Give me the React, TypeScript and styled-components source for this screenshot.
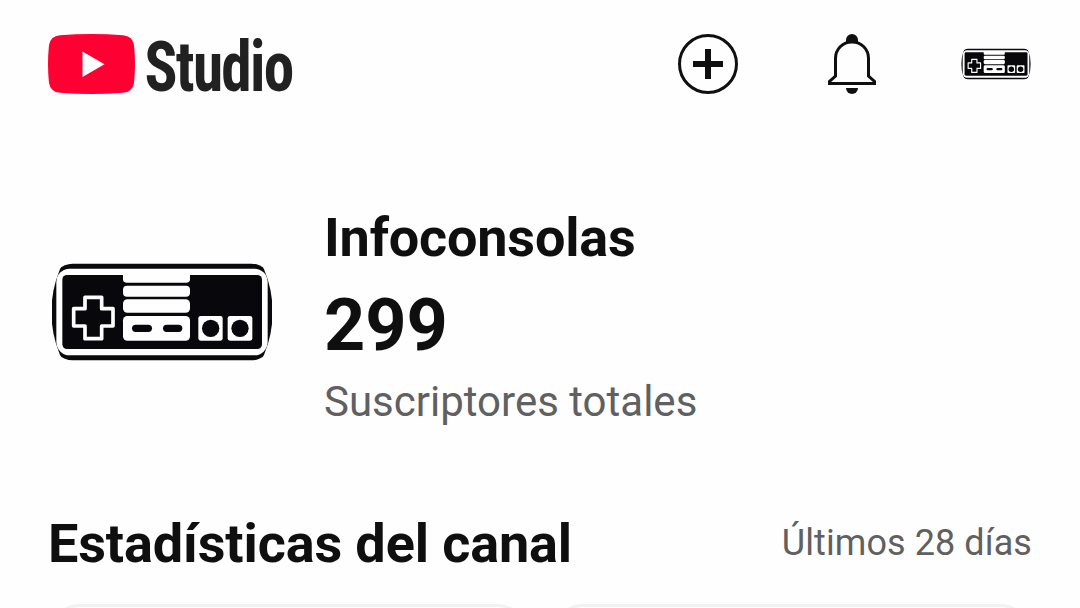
import React from 'react'
import styled, { createGlobalStyle } from 'styled-components'

const GlobalStyle = createGlobalStyle`
  * {
    box-sizing: border-box;
  }
  body {
    margin: 0;
    background: #fefefe;
    color: #0f0f0f;
    font-family: Roboto, 'Liberation Sans', sans-serif;
    overflow: hidden;
  }
`

interface IAvatarProps {
  size: number
}
const Avatar: React.FC<IAvatarProps> = ({ size }) => {
  const clipId = `avatar-clip-${size}`
  return (
    <AvatarSvg $size={size} viewBox="33 -147 666 666">
      <clipPath id={clipId}>
        <circle cx="366" cy="186" r="332" />
      </clipPath>
      <g clipPath={`url(#${clipId})`}>
        <rect x="36" y="41" width="660" height="290" rx="62" fill="#0a0a0c" />
        <rect x="49" y="56" width="634" height="260" rx="40" fill="#fefefe" />
        <rect x="67" y="75" width="599" height="222" rx="14" fill="#08070b" />
        <path
          d="M249 66H450V88Q450 98 440 98H259Q249 98 249 88Z"
          fill="#fefefe"
        />
        <rect x="249" y="107" width="201" height="33" rx="12" fill="#fefefe" />
        <rect x="249" y="148" width="201" height="40" rx="13" fill="#fefefe" />
        <rect x="249" y="198" width="201" height="74" rx="13" fill="#fefefe" />
        <rect x="276" y="224" width="60" height="22" rx="11" fill="#08070b" />
        <rect x="369" y="224" width="58" height="22" rx="11" fill="#08070b" />
        <path
          d="M135 142H185V176H219V228H185V266H135V228H101V176H135Z"
          fill="none"
          stroke="#fefefe"
          strokeWidth="11"
          strokeLinejoin="round"
        />
        <rect x="475" y="198" width="73" height="74" rx="7" fill="#fefefe" />
        <rect x="563" y="198" width="74" height="74" rx="7" fill="#fefefe" />
        <circle cx="512" cy="235" r="26" fill="#08070b" />
        <circle cx="600" cy="235" r="26" fill="#08070b" />
      </g>
    </AvatarSvg>
  )
}

const StudioLogo: React.FC = () => (
  <LogoSvg viewBox="0 0 246 64">
    <path
      d="M12 3.2Q43.5 .8 75 3.2Q84.5 4 86 13Q88 32 86 51Q84.5 60 75 60.8Q43.5 63.2 12 60.8Q2.5 60 1 51Q-1 32 1 13Q2.5 4 12 3.2Z"
      fill="#ff0033"
    />
    <path d="M34.5 19.5V45L56.5 32.2Z" fill="#fff" />
    <LogoText x="96.500" y="59" textLength="148" lengthAdjust="spacingAndGlyphs">
      Studio
    </LogoText>
  </LogoSvg>
)

const CreateIcon: React.FC = () => (
  <IconSvg viewBox="0 0 72 72">
    <circle cx="36" cy="36" r="28.5" stroke="#0f0f0f" strokeWidth="3" />
    <path d="M36 21V51M21 36H51" stroke="#0f0f0f" strokeWidth="6" />
  </IconSvg>
)

const BellIcon: React.FC = () => (
  <IconSvg viewBox="0 0 72 72">
    <path
      d="M19.5 48V30.5C19.5 21 26.5 14 36 14S52.5 21 52.5 30.5V48L58.5 53.5V55.5H13.5V53.5L19.5 48Z"
      stroke="#0f0f0f"
      strokeWidth="3"
    />
    <path d="M30 14.5V12A6 6 0 0 1 42 12V14.5Q36 12 30 14.5Z" fill="#0f0f0f" />
    <path d="M30 60H42A6 6 0 0 1 30 60Z" fill="#0f0f0f" />
  </IconSvg>
)

const App: React.FC = () => {
  return (
    <Page>
      <GlobalStyle />
      <Header>
        <StudioLogo />
        <Actions>
          <IconButton aria-label="Crear">
            <CreateIcon />
          </IconButton>
          <IconButton aria-label="Notificaciones">
            <BellIcon />
          </IconButton>
          <IconButton aria-label="Cuenta">
            <Avatar size={70} />
          </IconButton>
        </Actions>
      </Header>
      <Channel>
        <Avatar size={222} />
        <ChannelInfo>
          <ChannelName>Infoconsolas</ChannelName>
          <SubscriberCount>299</SubscriberCount>
          <SubscriberLabel>Suscriptores totales</SubscriberLabel>
        </ChannelInfo>
      </Channel>
      <SectionHeader>
        <SectionTitle>Estadísticas del canal</SectionTitle>
        <Period>Últimos 28 días</Period>
      </SectionHeader>
      <Cards>
        <Card />
        <Card />
      </Cards>
    </Page>
  )
}

export default App

const Page = styled.div`
  width: 1080px;
  height: 608px;
  overflow: hidden;
`

const Header = styled.header`
  display: flex;
  align-items: center;
  justify-content: space-between;
  height: 128px;
  padding: 0 48px;
`

const LogoSvg = styled.svg`
  width: 246px;
  height: 64px;
  overflow: visible;
`

const LogoText = styled.text`
  font-size: 71px;
  font-weight: 700;
  font-stretch: 75%;
  letter-spacing: -2px;
  fill: #212121;
`

const Actions = styled.div`
  display: flex;
  gap: 72px;
`

const IconButton = styled.button`
  display: flex;
  align-items: center;
  justify-content: center;
  width: 72px;
  height: 72px;
  padding: 0;
  border: 0;
  background: none;
`

const IconSvg = styled.svg`
  width: 72px;
  height: 72px;
  fill: none;
`

const AvatarSvg = styled.svg<{ $size: number }>`
  flex: none;
  width: ${(props) => props.$size}px;
  height: ${(props) => props.$size}px;
`

const Channel = styled.section`
  display: flex;
  align-items: center;
  gap: 51px;
  height: 222px;
  margin-top: 73px;
  padding-left: 51px;
`

const ChannelInfo = styled.div`
  display: flex;
  flex-direction: column;
  padding-top: 9px;
`

const ChannelName = styled.h1`
  margin: 0;
  font-size: 54px;
  font-weight: 700;
  letter-spacing: -0.2px;
  line-height: 72px;
`

const SubscriberCount = styled.div`
  margin-top: 7px;
  font-size: 72px;
  font-weight: 700;
  line-height: 90px;
`

const SubscriberLabel = styled.div`
  margin-top: 1px;
  color: #606060;
  font-size: 42px;
  line-height: 60px;
`

const SectionHeader = styled.div`
  display: flex;
  align-items: center;
  justify-content: space-between;
  height: 72px;
  margin-top: 85px;
  padding: 0 48px;
`

const SectionTitle = styled.h2`
  margin: 0;
  font-size: 54px;
  font-weight: 700;
  letter-spacing: -0.12px;
  line-height: 72px;
`

const Period = styled.span`
  padding-bottom: 2px;
  color: #606060;
  font-size: 36px;
  letter-spacing: 0.08px;
  line-height: 48px;
`

const Cards = styled.div`
  display: grid;
  grid-template-columns: 1fr 1fr;
  gap: 22px;
  margin-top: 24px;
  padding: 0 48px;
`

const Card = styled.div`
  height: 240px;
  border: 3px solid #f2f2f2;
  border-radius: 32px;
`
